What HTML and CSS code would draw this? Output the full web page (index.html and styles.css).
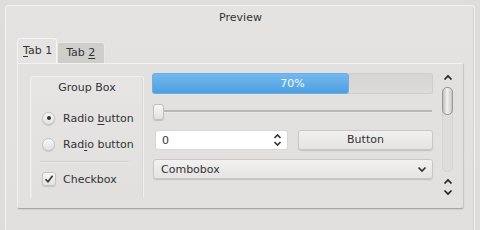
FILE: index.html
```html
<!DOCTYPE html>
<html lang="en">
<head>
    <meta charset="UTF-8">
    <title>Preview</title>
    <link rel="stylesheet" href="styles.css">
</head>
<body>
    <div class="preview">
        <div class="preview-title">Preview</div>

        <div class="tabs">
            <div class="tab tab-active"><u>T</u>ab 1</div>
            <div class="tab">Tab <u>2</u></div>
        </div>

        <div class="pane">
            <div class="group-box">
                <div class="group-title">Group Box</div>
                <label class="radio-row first">
                    <span class="radio checked"></span>
                    <span>Radio <u>b</u>utton</span>
                </label>
                <label class="radio-row">
                    <span class="radio"></span>
                    <span>Rad<u>i</u>o button</span>
                </label>
                <div class="separator"></div>
                <label class="check-row">
                    <span class="checkbox">
                        <svg width="10" height="10" viewBox="0 0 10 10"><path d="M1.5 5.2 L4 7.8 L8.6 1.8" fill="none" stroke="#333" stroke-width="1.6"/></svg>
                    </span>
                    <span>Checkbox</span>
                </label>
            </div>

            <div class="controls">
                <div class="progress">
                    <div class="progress-fill" style="width: 70%"></div>
                    <div class="progress-text">70%</div>
                </div>

                <div class="slider">
                    <div class="slider-handle"></div>
                    <div class="slider-groove"></div>
                </div>

                <div class="row">
                    <div class="spinbox">
                        <span>0</span>
                        <svg width="9" height="14" viewBox="0 0 9 14"><path d="M1.5 5 L4.5 2 L7.5 5 M1.5 9 L4.5 12 L7.5 9" fill="none" stroke="#333" stroke-width="1.6"/></svg>
                    </div>
                    <div class="button">Button</div>
                </div>

                <div class="combobox">
                    <span>Combobox</span>
                    <svg width="10" height="7" viewBox="0 0 10 7"><path d="M1.5 1.5 L5 5 L8.5 1.5" fill="none" stroke="#333" stroke-width="1.7"/></svg>
                </div>
            </div>

            <div class="scrollbar">
                <svg width="10" height="7" viewBox="0 0 10 7"><path d="M1.5 5.5 L5 2 L8.5 5.5" fill="none" stroke="#222" stroke-width="1.7"/></svg>
                <div class="scroll-track">
                    <div class="scroll-handle"></div>
                </div>
                <svg width="10" height="7" viewBox="0 0 10 7"><path d="M1.5 5.5 L5 2 L8.5 5.5" fill="none" stroke="#222" stroke-width="1.7"/></svg>
                <svg class="scroll-down" width="10" height="7" viewBox="0 0 10 7"><path d="M1.5 1.5 L5 5 L8.5 1.5" fill="none" stroke="#222" stroke-width="1.7"/></svg>
            </div>
        </div>
    </div>
</body>
</html>
```

FILE: styles.css
```css
body {
    margin: 0;
    background: #dedddc;
    font-family: "DejaVu Sans", sans-serif;
    font-size: 11px;
    color: #333;
    overflow: hidden;
}

u {
    text-decoration-thickness: 1px;
    text-underline-offset: 2px;
}

.preview {
    margin: 5px 5px 0 5px;
    height: 224px;
    border: 1px solid #f3f3f2;
    border-bottom: none;
    border-radius: 4px 4px 0 0;
    background: linear-gradient(#e4e3e2, #e1e0df);
    padding: 0 10px 0 11px;
    box-shadow: inset -1px 0 0 #d2d1d0;
}

.preview-title {
    text-align: center;
    height: 23px;
    line-height: 23px;
}

/* Tabs */
.tabs {
    display: flex;
    margin-top: 9px;
    height: 25px;
    align-items: flex-end;
}

.tab {
    padding: 0 9px 0 8px;
    height: 20px;
    line-height: 20px;
    background: #cfcecd;
    border: 1px solid #e9e8e7;
    border-bottom: none;
    border-radius: 3px 3px 0 0;
    white-space: nowrap;
}

.tab-active {
    height: 24px;
    line-height: 24px;
    background: #e5e4e3;
    border-color: #f5f5f4;
    padding: 0 4px 0 5px;
}

.pane {
    height: 135px;
    border: 1px solid #f2f2f1;
    border-right-color: #c8c7c6;
    border-bottom-color: #a9a8a7;
    border-radius: 0 3px 3px 3px;
    background: #e2e1e0;
    display: flex;
    padding: 9px 8px 0 12px;
    box-shadow: 0 1px 1px rgba(0, 0, 0, 0.08);
}

/* Group box */
.group-box {
    width: 112px;
    height: 121px;
    margin-top: 3px;
    border: 1px solid #f0f0ef;
    border-bottom: none;
    border-radius: 3px 3px 0 0;
    background: linear-gradient(#e6e5e4, #e1e0df);
    box-shadow: inset 1px 0 0 #e9e8e7, inset -1px 0 0 #d8d7d6;
}

.group-title {
    text-align: center;
    margin-top: 3px;
    height: 16px;
    line-height: 16px;
}

.radio-row, .check-row {
    display: flex;
    align-items: center;
    gap: 8px;
    padding-left: 11px;
    height: 18px;
}

.radio-row {
    margin-top: 8px;
}

.radio-row.first {
    margin-top: 13px;
}

.radio {
    width: 13px;
    height: 13px;
    border-radius: 50%;
    border: 1px solid #c4c3c2;
    background: linear-gradient(#f7f7f6, #e3e2e1);
    display: flex;
    align-items: center;
    justify-content: center;
    box-sizing: border-box;
    box-shadow: 0 1px 1px rgba(0, 0, 0, 0.12);
}

.radio.checked::after {
    content: "";
    width: 4px;
    height: 4px;
    border-radius: 50%;
    background: #333;
}

.separator {
    height: 1px;
    margin: 8px 14px 0 9px;
    background: #d2d1d0;
    border-bottom: 1px solid #ecebea;
}

.check-row {
    margin-top: 7px;
    gap: 7px;
}

.checkbox {
    width: 14px;
    height: 14px;
    box-sizing: border-box;
    border: 1px solid #c4c3c2;
    border-radius: 3px;
    background: linear-gradient(#f6f6f5, #e4e3e2);
    display: flex;
    align-items: center;
    justify-content: center;
    box-shadow: 0 1px 1px rgba(0, 0, 0, 0.12);
}

/* Right-hand controls */
.controls {
    width: 281px;
    margin-left: 8px;
    display: flex;
    flex-direction: column;
}

.progress {
    position: relative;
    height: 21px;
    border-radius: 3px;
    background: linear-gradient(#d5d4d3, #dddcdb);
    box-shadow: inset 0 0 0 1px #cfcecd;
}

.progress-fill {
    box-sizing: border-box;
    border: 1px solid #6aaee6;
    border-radius: 3px;
    height: 21px;
    background: linear-gradient(#74b8ee, #4e9fe0);
}

.progress-text {
    position: absolute;
    inset: 0;
    text-align: center;
    line-height: 21px;
    color: #f4f8fc;
}

.slider {
    display: flex;
    align-items: center;
    height: 19px;
    margin-top: 8px;
    padding-left: 1px;
}

.slider-handle {
    width: 11px;
    height: 16px;
    box-sizing: border-box;
    border: 1px solid #c0bfbe;
    border-radius: 3px;
    background: linear-gradient(#f7f7f6, #e2e1e0);
    box-shadow: 0 1px 1px rgba(0, 0, 0, 0.15);
}

.slider-groove {
    flex: 1;
    height: 2px;
    margin-right: 1px;
    background: #b8b7b6;
    border-bottom: 1px solid #e9e8e7;
}

.row {
    display: flex;
    margin-top: 9px;
    height: 20px;
    gap: 10px;
}

.spinbox {
    width: 133px;
    margin-left: 3px;
    box-sizing: border-box;
    border: 1px solid #d8d7d6;
    border-radius: 3px;
    background: #fff;
    display: flex;
    align-items: center;
    justify-content: space-between;
    padding: 0 5px 0 6px;
}

.button {
    flex: 1;
    box-sizing: border-box;
    border: 1px solid #c9c8c7;
    border-radius: 3px;
    background: linear-gradient(#f1f1f0, #e5e4e3);
    text-align: center;
    line-height: 18px;
    box-shadow: 0 1px 1px rgba(0, 0, 0, 0.15);
}

.combobox {
    margin-top: 9px;
    margin-left: 1px;
    height: 20px;
    box-sizing: border-box;
    border: 1px solid #c9c8c7;
    border-radius: 3px;
    background: linear-gradient(#f1f1f0, #e5e4e3);
    display: flex;
    align-items: center;
    justify-content: space-between;
    padding: 0 5px 0 7px;
    box-shadow: 0 1px 1px rgba(0, 0, 0, 0.15);
}

/* Scrollbar */
.scrollbar {
    width: 11px;
    margin-left: 9px;
    margin-top: 1px;
    display: flex;
    flex-direction: column;
    align-items: center;
}

.scrollbar svg {
    flex: none;
}

.scroll-track {
    width: 11px;
    height: 85px;
    margin: 6px 0 6px;
    box-sizing: border-box;
    border: 1px solid #d5d4d3;
    border-radius: 5px;
    background: #dedddc;
}

.scroll-handle {
    height: 26px;
    margin: -1px;
    border-radius: 5px;
    border: 1px solid #9a9998;
    background: linear-gradient(90deg, #bdbcbb, #f1f1f0 45%, #c8c7c6);
}

.scroll-down {
    margin-top: 4px;
}
```
